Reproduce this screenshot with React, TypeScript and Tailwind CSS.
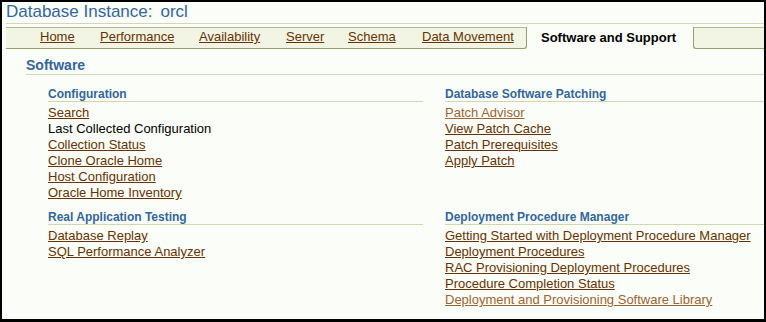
import React from "react";

type Item = { label: string; href?: boolean; visited?: boolean };

const tabs = [
  { label: "Home", w: "w-[60px]" },
  { label: "Performance", w: "w-[99px]" },
  { label: "Availability", w: "w-[87px]" },
  { label: "Server", w: "w-[62px]" },
  { label: "Schema", w: "w-[74px]" },
  { label: "Data Movement", w: "w-[104px]" },
];

const groups: { title: string; items: Item[] }[] = [
  {
    title: "Configuration",
    items: [
      { label: "Search", href: true },
      { label: "Last Collected Configuration" },
      { label: "Collection Status", href: true },
      { label: "Clone Oracle Home", href: true },
      { label: "Host Configuration", href: true },
      { label: "Oracle Home Inventory", href: true },
    ],
  },
  {
    title: "Database Software Patching",
    items: [
      { label: "Patch Advisor", href: true, visited: true },
      { label: "View Patch Cache", href: true },
      { label: "Patch Prerequisites", href: true },
      { label: "Apply Patch", href: true },
    ],
  },
  {
    title: "Real Application Testing",
    items: [
      { label: "Database Replay", href: true },
      { label: "SQL Performance Analyzer", href: true },
    ],
  },
  {
    title: "Deployment Procedure Manager",
    items: [
      { label: "Getting Started with Deployment Procedure Manager", href: true },
      { label: "Deployment Procedures", href: true },
      { label: "RAC Provisioning Deployment Procedures", href: true },
      { label: "Procedure Completion Status", href: true },
      { label: "Deployment and Provisioning Software Library", href: true, visited: true },
    ],
  },
];

function Group({ title, items }: { title: string; items: Item[] }) {
  return (
    <div>
      <div className="border-b border-[#d3d7b0] text-[12px] font-bold leading-[14px] text-[#336699]">
        {title}
      </div>
      <ul className="mt-[3px] text-[13px] leading-[16px]">
        {items.map((it) => (
          <li key={it.label}>
            {it.href ? (
              <a
                href="#"
                className={`underline ${it.visited ? "text-[#996633]" : "text-[#663300]"}`}
              >
                {it.label}
              </a>
            ) : (
              <span className="text-black">{it.label}</span>
            )}
          </li>
        ))}
      </ul>
    </div>
  );
}

export default function App() {
  return (
    <div className="h-[322px] w-[766px] overflow-hidden border-2 border-b-[3px] border-black bg-[#fbfdf8] pl-[4px] font-['Liberation_Sans',Arial,sans-serif]">
      {/* page title */}
      <div className="text-[17px] leading-[20px] text-[#336699]">
        Database Instance:<span className="ml-[8px]">orcl</span>
      </div>

      {/* tab bar */}
      <div className="mt-[1px] border-t border-[#d3d7b3] pt-[3px]">
        <div className="flex h-[22px]">
          <div className="flex w-[521px] rounded-br-[3px] border-y border-r border-t-[#b4b794] border-b-[#9a9d6c] border-r-[#9a9d6c] bg-[#f3f5e4] pl-[34px] text-[13px] leading-[18px]">
            {tabs.map((t) => (
              <div key={t.label} className={t.w}>
                <a href="#" className="text-[#663300] underline">
                  {t.label}
                </a>
              </div>
            ))}
          </div>
          <div className="w-[166px] pl-[14px] pt-[2px] text-[13px] font-bold leading-[18px] text-black">
            Software and Support
          </div>
          <div className="flex-1 rounded-bl-[3px] border-y border-l border-t-[#b4b794] border-b-[#9a9d6c] border-l-[#9a9d6c] bg-[#f3f5e4]" />
        </div>
      </div>

      {/* section */}
      <div className="ml-[20px] mt-[8px]">
        <div className="border-b border-[#d3d7b0] text-[14px] font-bold leading-[17px] text-[#336699]">
          Software
        </div>
        <div className="mt-[12px] grid grid-cols-[375px_1fr] gap-x-[22px] gap-y-[9px] pl-[22px]">
          {groups.map((g) => (
            <Group key={g.title} title={g.title} items={g.items} />
          ))}
        </div>
      </div>
    </div>
  );
}
